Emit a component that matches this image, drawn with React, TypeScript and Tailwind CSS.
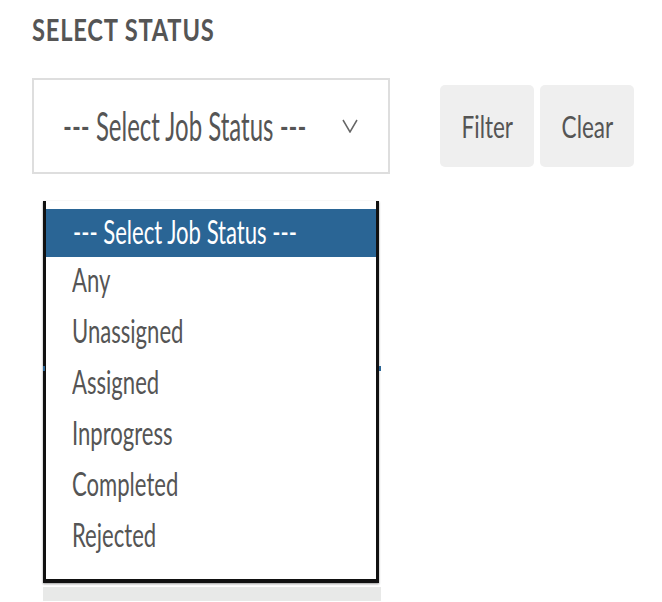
import React from "react";

function Squeeze({ children, sx }: { children: React.ReactNode; sx: string }) {
  return <span className={`inline-block origin-left whitespace-nowrap ${sx}`}>{children}</span>;
}

export default function App() {
  const items = ["Any", "Unassigned", "Assigned", "Inprogress", "Completed", "Rejected"];
  return (
    <div className="w-[662px] h-[602px] bg-white relative overflow-hidden" style={{ fontFamily: "Lato, 'Open Sans', sans-serif" }}>
      <div className="pl-[32px] pt-[10px] h-[50px] leading-[38px] text-[30px] font-bold text-[#555] tracking-[1px]">
        <Squeeze sx="scale-x-[0.79]">SELECT STATUS</Squeeze>
      </div>
      <div className="flex items-center ml-[32px] mt-[28px]">
        <div className="w-[358px] h-[96px] border-2 border-[#dedede] flex items-center pl-[29px] pr-[30px]">
          <span className="flex-1 min-w-0 text-[40px] text-[#555] leading-none">
            <Squeeze sx="scale-x-[0.6]">--- Select Job Status ---</Squeeze>
          </span>
          <svg width="16" height="14" viewBox="0 0 16 14" className="text-[#666] shrink-0">
            <path d="M1 1 L8 13 L15 1" fill="none" stroke="currentColor" strokeWidth="1.5" />
          </svg>
        </div>
        <div className="flex gap-[6px] ml-[50px]">
          <button className="w-[94px] h-[82px] rounded-[5px] bg-[#efefef] text-[30px] text-[#555]">
            <span className="inline-block scale-x-[0.75]">Filter</span>
          </button>
          <button className="w-[94px] h-[82px] rounded-[5px] bg-[#efefef] text-[30px] text-[#555]">
            <span className="inline-block scale-x-[0.75]">Clear</span>
          </button>
        </div>
      </div>
      <div className="ml-[43px] mt-[27px] w-[338px]">
        <div className="relative w-[336px] border-x-[3px] border-b-[4px] border-[#111] bg-white pt-[8px] pb-[16px] shadow-[0_1px_2px_rgba(0,0,0,0.4)]">
          <div className="h-[48px] bg-[#2a6595] text-white text-[32px] leading-[46px] pl-[27px]">
            <Squeeze sx="scale-x-[0.69]">--- Select Job Status ---</Squeeze>
          </div>
          {items.map((t) => (
            <div key={t} className="h-[51px] text-[32px] leading-[45px] text-[#555] pl-[26px]">
              <Squeeze sx="scale-x-[0.69]">{t}</Squeeze>
            </div>
          ))}
          <span className="absolute left-[-3px] top-[165px] w-[2px] h-[5px] bg-[#2a6595]" />
          <span className="absolute right-[-5px] top-[165px] w-[2px] h-[5px] bg-[#2a6595]" />
        </div>
        <div className="h-[14px] bg-[#e8e9e8] mt-[4px] w-[338px]" />
      </div>
    </div>
  );
}
